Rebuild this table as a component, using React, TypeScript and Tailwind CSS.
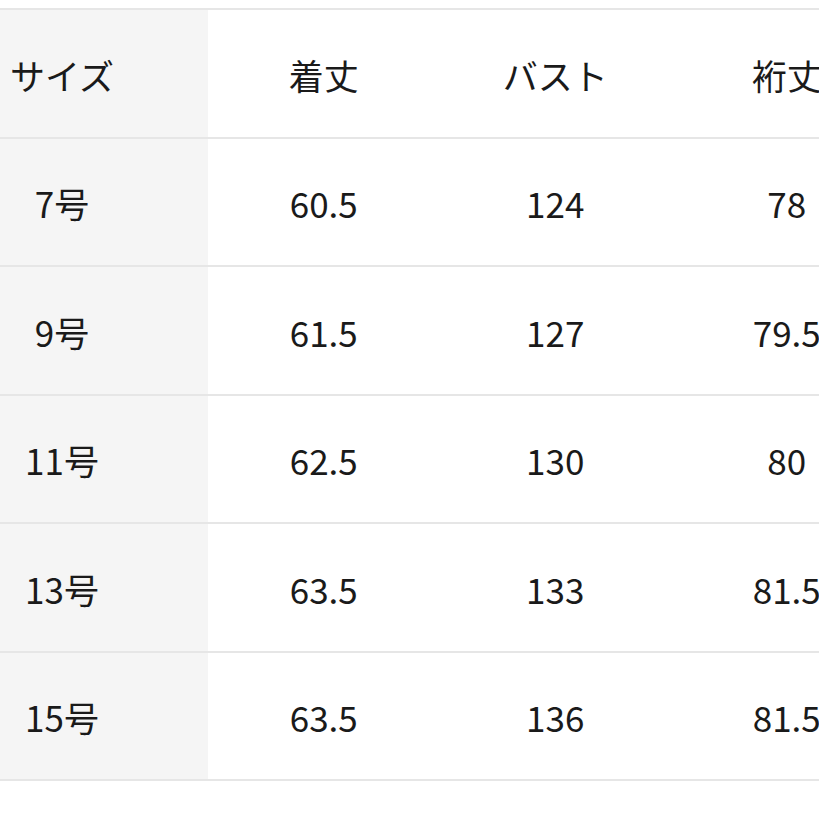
const headers = ['着丈', 'バスト', '裄丈'];

const rows = [
  { size: '7号', values: ['60.5', '124', '78'] },
  { size: '9号', values: ['61.5', '127', '79.5'] },
  { size: '11号', values: ['62.5', '130', '80'] },
  { size: '13号', values: ['63.5', '133', '81.5'] },
  { size: '15号', values: ['63.5', '136', '81.5'] },
];

function Row({ label, cells }: { label: string; cells: string[] }) {
  return (
    <div className="flex h-[128.5px] border-b-2 border-[#e6e6e6]">
      <div className="flex w-[208px] shrink-0 items-center bg-[#f5f5f5] pt-[3px]">
        <span className="w-[124px] text-center">{label}</span>
      </div>
      {cells.map((c, i) => (
        <div key={i} className="flex w-[231.5px] shrink-0 items-center justify-center pt-[3px]">
          {c}
        </div>
      ))}
    </div>
  );
}

export default function App() {
  return (
    <div
      className="h-[819px] w-[819px] overflow-hidden bg-white pt-[8px] text-[35px] text-[#1a1a1a]"
      style={{ fontFamily: '"Noto Sans CJK JP", "Noto Sans", sans-serif' }}
    >
      <div className="border-t-2 border-[#e6e6e6]">
        <Row label="サイズ" cells={headers} />
        {rows.map((r) => (
          <Row key={r.size} label={r.size} cells={r.values} />
        ))}
      </div>
    </div>
  );
}
